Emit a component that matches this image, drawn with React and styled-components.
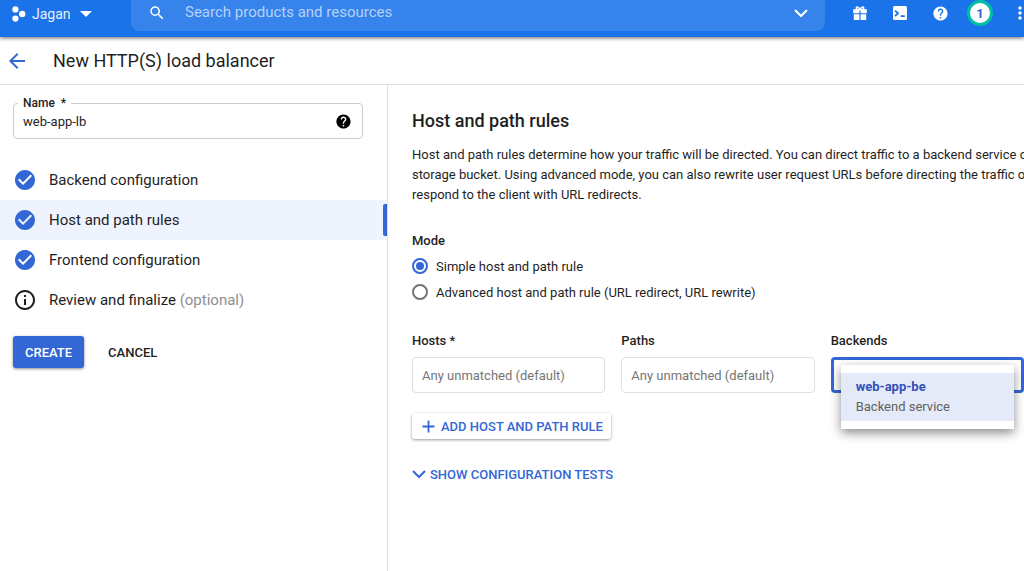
import React from "react";
import styled, { createGlobalStyle } from "styled-components";
import {
  MdArrowBack,
  MdCheckCircle,
  MdHelp,
  MdInfoOutline,
  MdMoreVert,
  MdSearch
} from "react-icons/md";

const headerBlue = "#1a73e8";
const searchBlue = "#3583eb";
const actionBlue = "#3367d6";
const ink = "#1f1f1f";
const grey = "#757575";
const line = "#e0e0e0";

const GlobalStyle = createGlobalStyle`
  * {
    box-sizing: border-box;
  }

  body {
    margin: 0;
    overflow-x: hidden;
    background: #fff;
    color: ${ink};
    font-family: Roboto, "Liberation Sans", sans-serif;
    font-size: 13px;
  }

  button,
  input,
  select {
    font-family: inherit;
  }
`;

const Page = styled.div`
  display: flex;
  flex-direction: column;
  min-height: 100vh;
  overflow: hidden;
`;

const Header = styled.header`
  position: relative;
  display: flex;
  align-items: flex-start;
  height: 37px;
  background: ${headerBlue};
  box-shadow: 0 1px 4px rgba(0, 0, 0, 0.6);
  color: white;
`;

const IconButton = styled.button`
  display: flex;
  align-items: center;
  justify-content: center;
  flex: none;
  width: 40px;
  height: 26px;
  padding: 0;
  border: 0;
  background: none;
  color: inherit;
  cursor: pointer;
`;

const ProjectButton = styled.button`
  display: flex;
  align-items: center;
  flex: none;
  width: 131px;
  height: 28px;
  padding: 0 0 0 12px;
  border: 0;
  background: none;
  color: white;
  font-size: 14px;
  cursor: pointer;

  span {
    margin: 0 9px 0 6px;
    color: #e8f0fe;
  }
`;

const SearchBar = styled.div`
  display: flex;
  align-items: flex-start;
  flex: 1;
  height: 31px;
  padding: 0 4px 0 6px;
  border-radius: 0 0 8px 8px;
  background: ${searchBlue};
`;

const SearchInput = styled.input`
  flex: 1;
  min-width: 0;
  height: 24px;
  padding: 0 8px;
  border: 0;
  outline: none;
  background: none;
  color: white;
  font-size: 15px;

  &::placeholder {
    color: #b5d1f8;
    opacity: 1;
  }
`;

const HeaderTools = styled.div`
  display: flex;
  flex: none;
  width: 199px;
  padding-left: 15px;
  overflow: hidden;
`;

const Avatar = styled.span`
  display: flex;
  align-items: center;
  justify-content: center;
  flex: none;
  width: 26px;
  height: 26px;
  border: 3px solid #00bfa5;
  border-radius: 50%;
  background: white;
  color: ${actionBlue};
  font-size: 13px;
  font-weight: 700;
`;

const TitleBar = styled.div`
  display: flex;
  align-items: center;
  height: 48px;
  padding-left: 5px;
  border-bottom: 1px solid ${line};
`;

const BackLink = styled.a`
  display: flex;
  width: 48px;
  color: ${actionBlue};
`;

const Title = styled.h1`
  margin: 0;
  font-size: 18px;
  font-weight: 400;
`;

const Body = styled.div`
  display: flex;
  flex: 1;
`;

const Sidebar = styled.aside`
  flex: none;
  width: 388px;
  padding-top: 18px;
  border-right: 1px solid ${line};
`;

const NameField = styled.div`
  position: relative;
  display: flex;
  align-items: center;
  height: 36px;
  margin: 0 24px 21px 13px;
  padding: 0 10px 0 9px;
  border: 1px solid #ccc;
  border-radius: 4px;

  label {
    position: absolute;
    top: -8px;
    left: 4px;
    padding: 0 5px;
    background: white;
    font-size: 12px;
    font-weight: 500;
    line-height: 14px;
    white-space: pre;
  }

  input {
    flex: 1;
    min-width: 0;
    padding: 0;
    border: 0;
    outline: none;
    color: ${ink};
    font-size: 13px;
  }
`;

const Steps = styled.nav`
  display: flex;
  flex-direction: column;
`;

const Step = styled.a`
  display: flex;
  align-items: center;
  height: 40px;
  padding-left: 13px;
  background: ${props => (props.$active ? "#eef3fe" : "transparent")};
  color: ${ink};
  font-size: 15px;
  text-decoration: none;

  svg {
    margin-right: 12px;
    color: ${props => (props.$done ? actionBlue : ink)};
  }

  small {
    color: #8f8f8f;
    font-size: inherit;
  }

  &::after {
    content: "";
    width: 4px;
    height: 32px;
    margin-left: auto;
    border-radius: 2px 0 0 2px;
    background: ${props => (props.$active ? actionBlue : "transparent")};
  }
`;

const Actions = styled.div`
  display: flex;
  gap: 12px;
  padding: 16px 13px;
`;

const ActionButton = styled.button`
  height: 32px;
  padding: 0 12px;
  border: 0;
  border-radius: 3px;
  background: ${props => (props.$primary ? actionBlue : "none")};
  box-shadow: ${props =>
    props.$primary ? "0 1px 3px rgba(0, 0, 0, 0.45)" : "none"};
  color: ${props => (props.$primary ? "white" : ink)};
  font-size: 13px;
  font-weight: 500;
  cursor: pointer;
`;

const Main = styled.main`
  flex: 1;
  min-width: 0;
  padding: 24px 0 24px 24px;
`;

const SectionTitle = styled.h2`
  margin: 0 0 12px;
  font-size: 18px;
  font-weight: 500;
  line-height: 24px;
`;

const Description = styled.p`
  margin: 0 0 24px;
  font-size: 13px;
  line-height: 20px;
  white-space: nowrap;
`;

const ModeGroup = styled.fieldset`
  display: flex;
  flex-direction: column;
  margin: 0 0 24px;
  padding: 0;
  border: 0;

  legend {
    padding: 0;
    font-weight: 500;
    line-height: 24px;
  }
`;

const RadioLabel = styled.label`
  display: flex;
  align-items: center;
  gap: 8px;
  height: 26px;

  input {
    appearance: none;
    display: grid;
    place-items: center;
    width: 16px;
    height: 16px;
    margin: 0;
    border: 2px solid ${grey};
    border-radius: 50%;
  }

  input:checked {
    border-color: ${actionBlue};
  }

  input:checked::before {
    content: "";
    width: 8px;
    height: 8px;
    border-radius: 50%;
    background: ${actionBlue};
  }
`;

const RuleGrid = styled.div`
  display: grid;
  grid-template-columns: repeat(3, 1fr);
  gap: 16px;
  margin-bottom: 20px;
`;

const Field = styled.div`
  position: relative;
  display: flex;
  flex-direction: column;

  label {
    margin-bottom: 4px;
    font-weight: 500;
    line-height: 24px;
  }
`;

const TextInput = styled.input`
  width: 100%;
  height: 36px;
  padding: 0 9px;
  border: 1px solid ${line};
  border-radius: 4px;
  color: ${ink};
  font-size: 13px;

  &::placeholder {
    color: ${grey};
    opacity: 1;
  }
`;

const BackendSelect = styled.select`
  appearance: none;
  width: 100%;
  height: 36px;
  padding: 0 9px;
  border: 3px solid ${actionBlue};
  border-radius: 4px;
  outline: none;
  background: white;
`;

const BackendMenu = styled.div`
  position: absolute;
  top: 36px;
  left: 10px;
  right: 10px;
  padding: 8px 0;
  background: white;
  box-shadow: 0 4px 10px rgba(0, 0, 0, 0.45);
`;

const BackendOption = styled.div`
  padding: 4px 15px;
  background: #e4eaf8;
  color: #616161;
  line-height: 20px;

  strong {
    display: block;
    color: #3450b8;
    font-weight: 700;
  }
`;

const RuleActions = styled.div`
  display: flex;
  flex-direction: column;
  align-items: flex-start;
  gap: 22px;
`;

const TextButton = styled.button`
  display: flex;
  align-items: center;
  gap: ${props => (props.$raised ? 6 : 4)}px;
  height: 26px;
  padding: ${props => (props.$raised ? "0 8px 0 10px" : "0")};
  border: 0;
  border-radius: 3px;
  background: white;
  box-shadow: ${props =>
    props.$raised ? "0 1px 3px rgba(0, 0, 0, 0.4)" : "none"};
  color: ${actionBlue};
  font-size: 13px;
  font-weight: 500;
  cursor: pointer;
`;

const ProjectIcon = () => (
  <svg width="14" height="16" viewBox="0 0 14 16" fill="currentColor">
    <circle cx="3.4" cy="3.4" r="3.1" />
    <circle cx="10.2" cy="8" r="3.2" />
    <circle cx="3.4" cy="12.6" r="3.1" />
  </svg>
);

const ShellIcon = () => (
  <svg width="14" height="14" viewBox="0 0 14 14">
    <rect width="14" height="14" rx="1.5" fill="white" />
    <path
      d="M2 4.600l3 2.700-3 2.700M7.800 10.200h4"
      fill="none"
      stroke={headerBlue}
      strokeWidth="1.8"
    />
  </svg>
);

const GiftIcon = () => (
  <svg width="14" height="14" viewBox="0 0 14 14">
    <path
      d="M7 3.500C6 .8 3.200.2 3.200 2.200c0 1.200 2 1.400 3.800 1.400s3.800-.2 3.800-1.400C10.800.2 8 .8 7 3.500z"
      fill="none"
      stroke="white"
      strokeWidth="1.4"
    />
    <path
      d="M.2 3.300h6.200v3.900H.2zM7.600 3.300h6.200v3.900H7.600zM.8 8.300h5.600V14H.8zM7.600 8.300h5.600V14H7.600z"
      fill="white"
    />
  </svg>
);

const ChevronIcon = () => (
  <svg width="14" height="10" viewBox="0 0 14 10">
    <path d="M1 2l6 6 6-6" fill="none" stroke="currentColor" strokeWidth="2" />
  </svg>
);

const PlusIcon = () => (
  <svg width="13" height="13" viewBox="0 0 13 13">
    <path d="M6.5.5v12M.5 6.5h12" stroke="currentColor" strokeWidth="1.8" />
  </svg>
);

const CaretIcon = () => (
  <svg width="12" height="6" viewBox="0 0 12 6">
    <path d="M0 0h12L6 6z" fill="currentColor" />
  </svg>
);

const steps = [
  { text: "Backend configuration", done: true },
  { text: "Host and path rules", done: true, active: true },
  { text: "Frontend configuration", done: true },
  { text: "Review and finalize", optional: true }
];

const TopBar = () => (
  <Header>
    <ProjectButton>
      <ProjectIcon />
      <span>Jagan</span>
      <CaretIcon />
    </ProjectButton>
    <SearchBar>
      <IconButton aria-label="Search">
        <MdSearch size="18" />
      </IconButton>
      <SearchInput
        aria-label="Search products and resources"
        placeholder="Search products and resources"
      />
      <IconButton aria-label="Expand search">
        <ChevronIcon />
      </IconButton>
    </SearchBar>
    <HeaderTools>
      <IconButton aria-label="Offers">
        <GiftIcon />
      </IconButton>
      <IconButton aria-label="Cloud Shell">
        <ShellIcon />
      </IconButton>
      <IconButton aria-label="Help">
        <MdHelp size="17" />
      </IconButton>
      <IconButton aria-label="Notifications">
        <Avatar>1</Avatar>
      </IconButton>
      <IconButton aria-label="More">
        <MdMoreVert size="20" />
      </IconButton>
    </HeaderTools>
  </Header>
);

export default class App extends React.Component {
  state = { mode: "simple" };

  setMode = e => this.setState({ mode: e.target.value });

  render() {
    const { mode } = this.state;
    return (
      <Page>
        <GlobalStyle />
        <TopBar />
        <TitleBar>
          <BackLink href="#" aria-label="Back">
            <MdArrowBack size="24" />
          </BackLink>
          <Title>New HTTP(S) load balancer</Title>
        </TitleBar>
        <Body>
          <Sidebar>
            <NameField>
              <label htmlFor="name">{"Name  *"}</label>
              <input id="name" defaultValue="web-app-lb" />
              <MdHelp size="17" color="black" />
            </NameField>
            <Steps>
              {steps.map(step => (
                <Step
                  key={step.text}
                  href="#"
                  $done={step.done}
                  $active={step.active}
                >
                  {step.done ? (
                    <MdCheckCircle size="24" />
                  ) : (
                    <MdInfoOutline size="24" />
                  )}
                  <span>
                    {step.text} {step.optional && <small>(optional)</small>}
                  </span>
                </Step>
              ))}
            </Steps>
            <Actions>
              <ActionButton $primary>CREATE</ActionButton>
              <ActionButton>CANCEL</ActionButton>
            </Actions>
          </Sidebar>
          <Main>
            <SectionTitle>Host and path rules</SectionTitle>
            <Description>
              Host and path rules determine how your traffic will be directed.
              You can direct traffic to a backend service or
              <br />
              storage bucket. Using advanced mode, you can also rewrite user
              request URLs before directing the traffic or
              <br />
              respond to the client with URL redirects.
            </Description>
            <ModeGroup>
              <legend>Mode</legend>
              <RadioLabel>
                <input
                  type="radio"
                  name="mode"
                  value="simple"
                  checked={mode === "simple"}
                  onChange={this.setMode}
                />
                Simple host and path rule
              </RadioLabel>
              <RadioLabel>
                <input
                  type="radio"
                  name="mode"
                  value="advanced"
                  checked={mode === "advanced"}
                  onChange={this.setMode}
                />
                Advanced host and path rule (URL redirect, URL rewrite)
              </RadioLabel>
            </ModeGroup>
            <RuleGrid>
              <Field>
                <label htmlFor="hosts">Hosts *</label>
                <TextInput id="hosts" placeholder="Any unmatched (default)" />
              </Field>
              <Field>
                <label htmlFor="paths">Paths</label>
                <TextInput id="paths" placeholder="Any unmatched (default)" />
              </Field>
              <Field>
                <label htmlFor="backends">Backends</label>
                <BackendSelect id="backends" defaultValue="">
                  <option value="" />
                  <option value="web-app-be">web-app-be</option>
                </BackendSelect>
                <BackendMenu role="listbox">
                  <BackendOption role="option">
                    <strong>web-app-be</strong>
                    Backend service
                  </BackendOption>
                </BackendMenu>
              </Field>
            </RuleGrid>
            <RuleActions>
              <TextButton $raised>
                <PlusIcon />
                ADD HOST AND PATH RULE
              </TextButton>
              <TextButton>
                <ChevronIcon />
                SHOW CONFIGURATION TESTS
              </TextButton>
            </RuleActions>
          </Main>
        </Body>
      </Page>
    );
  }
}
